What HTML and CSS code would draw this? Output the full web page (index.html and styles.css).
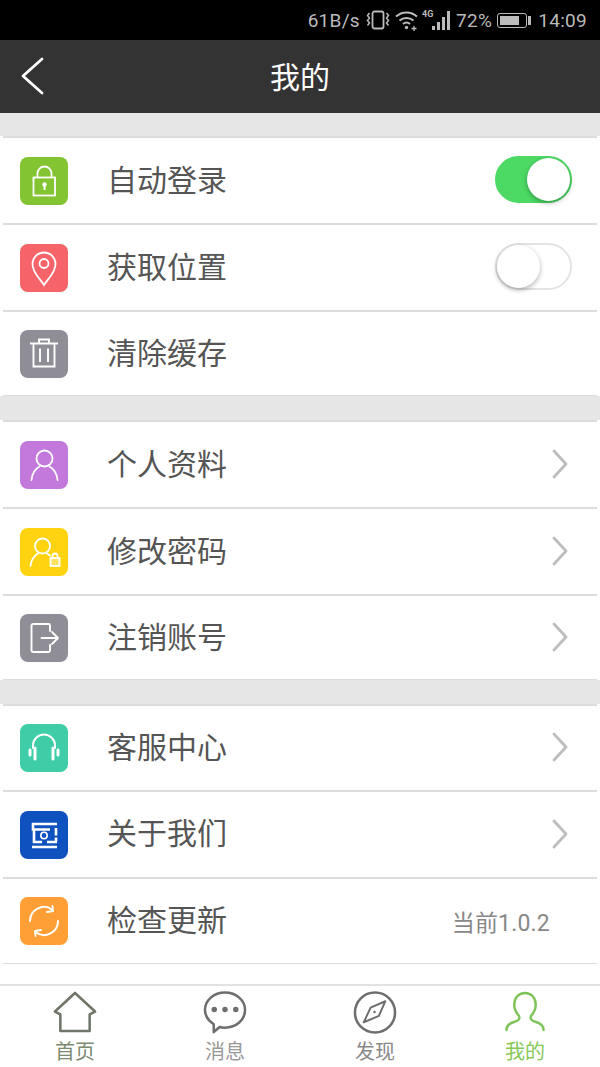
FILE: index.html
```html
<!DOCTYPE html>
<html lang="zh-CN">

<head>
    <meta charset="UTF-8">
    <meta content="width=device-width, initial-scale=1.0" name="viewport">
    <title>我的</title>
    <link rel="stylesheet" href="styles.css">
</head>

<body>

    <!-- 状态栏 -->
    <div class="statusbar">
        <span class="st-speed">61B/s</span>
        <svg class="st-vibrate" width="24" height="24" viewBox="0 0 24 24" fill="none" stroke="#bbb" stroke-width="1.800">
            <rect x="6.500" y="3.500" width="11" height="17" rx="2" />
            <path d="M3.500 5l-2 2.500 2 2.500-2 2.500 2 2.500-2 2.500M20.500 5l2 2.500-2 2.500 2 2.500-2 2.500 2 2.500" stroke-width="1.500" />
        </svg>
        <svg class="st-wifi" width="23" height="22" viewBox="0 0 23 22" fill="none" stroke="#bbb" stroke-width="2">
            <path d="M1 7.500c6-5.500 15-5.500 21 0M4.500 11.500c4-3.500 10-3.500 14 0M8 15c2-1.700 5-1.700 7 0" />
            <circle cx="11.500" cy="18.500" r="1.700" fill="#bbb" stroke="none" />
            <path d="M16.500 19.500h5M19 17v5" stroke-width="1.300" />
        </svg>
        <span class="st-net">
            <span class="st-4g">4G</span>
            <span class="st-bars">
                <i class="b1"></i><i class="b2"></i><i class="b3"></i><i class="b4"></i>
            </span>
        </span>
        <span class="st-batt-text">72%</span>
        <span class="st-batt"><span class="st-batt-fill"></span></span>
        <span class="st-batt-tip"></span>
        <span class="st-time">14:09</span>
    </div>

    <div class="header">
        <svg class="back" width="26" height="38" viewBox="0 0 26 38" fill="none" stroke="#fff" stroke-width="2.800" stroke-linecap="round" stroke-linejoin="round">
            <path d="M22 2 L3 19 L22 36" />
        </svg>
        <h1>我的</h1>
    </div>

    <div class="gap first"></div>

    <div class="group">
        <div class="row">
            <span class="icon green">
                <svg width="48" height="48" viewBox="0 0 48 48" fill="none" stroke="#fff" stroke-width="1.800">
                    <rect x="13.500" y="20.500" width="21.500" height="18" />
                    <path d="M17.500 20.500v-4a7 7 0 0 1 14 0v4" />
                    <circle cx="24.500" cy="27.500" r="2.200" fill="#fff" stroke="none" />
                    <path d="M24.500 28v5" stroke-width="2" />
                </svg>
            </span>
            <span class="label">自动登录</span>
            <span class="switch on"><span class="knob"></span></span>
        </div>
        <div class="row">
            <span class="icon red">
                <svg width="48" height="48" viewBox="0 0 48 48" fill="none" stroke="#fff" stroke-width="1.800">
                    <path d="M24 41c-4-6.500-11.500-12-11.500-21a11.500 11.500 0 0 1 23 0c0 9-7.500 14.500-11.500 21z" />
                    <circle cx="24" cy="19.500" r="4.500" />
                </svg>
            </span>
            <span class="label">获取位置</span>
            <span class="switch"><span class="knob"></span></span>
        </div>
        <div class="row">
            <span class="icon gray">
                <svg width="48" height="48" viewBox="0 0 48 48" fill="none" stroke="#fff" stroke-width="1.900">
                    <path d="M10 13.500h28M19 13.500v-4h10v4M13.500 13.500v23h21v-23M20 18.500v13.500M28 18.500v13.500" />
                </svg>
            </span>
            <span class="label">清除缓存</span>
        </div>
    </div>

    <div class="gap"></div>

    <div class="group">
        <div class="row">
            <span class="icon purple">
                <svg width="48" height="48" viewBox="0 0 48 48" fill="none" stroke="#fff" stroke-width="1.800" stroke-linecap="round">
                    <circle cx="24.500" cy="17.500" r="8" />
                    <path d="M11.500 39c.5-6 3.500-11 8-13.500M37.500 39c-.5-6-3.500-11-8-13.500" />
                </svg>
            </span>
            <span class="label">个人资料</span>
            <svg class="chevron" width="18" height="30" viewBox="0 0 18 30" fill="none" stroke="#bdbdbd" stroke-width="2.800" stroke-linecap="round" stroke-linejoin="round">
                <path d="M3 2 L15 15 L3 28" />
            </svg>
        </div>
        <div class="row">
            <span class="icon yellow">
                <svg width="48" height="48" viewBox="0 0 48 48" fill="none" stroke="#fff" stroke-width="1.800" stroke-linecap="round">
                    <circle cx="22.500" cy="18" r="7.500" />
                    <path d="M10.500 38c.5-6 3.500-10 7.500-12.500M27 25.500l3 2" />
                    <rect x="30.500" y="30" width="9" height="8" fill="#fff" fill-opacity="0.350" />
                    <path d="M32.500 30v-2a2.500 2.500 0 0 1 5 0v2" />
                </svg>
            </span>
            <span class="label">修改密码</span>
            <svg class="chevron" width="18" height="30" viewBox="0 0 18 30" fill="none" stroke="#bdbdbd" stroke-width="2.800" stroke-linecap="round" stroke-linejoin="round">
                <path d="M3 2 L15 15 L3 28" />
            </svg>
        </div>
        <div class="row">
            <span class="icon gray">
                <svg width="48" height="48" viewBox="0 0 48 48" fill="none" stroke="#fff" stroke-width="1.900" stroke-linecap="round" stroke-linejoin="round">
                    <path d="M30 17v-5.500a1.500 1.500 0 0 0-1.500-1.500h-15a2 2 0 0 0-2 2v24a2 2 0 0 0 2 2h15a1.500 1.500 0 0 0 1.500-1.500v-5.500" />
                    <path d="M21.500 24h16M32 18l6 6-6 6" />
                </svg>
            </span>
            <span class="label">注销账号</span>
            <svg class="chevron" width="18" height="30" viewBox="0 0 18 30" fill="none" stroke="#bdbdbd" stroke-width="2.800" stroke-linecap="round" stroke-linejoin="round">
                <path d="M3 2 L15 15 L3 28" />
            </svg>
        </div>
    </div>

    <div class="gap"></div>

    <div class="group third">
        <div class="row">
            <span class="icon teal">
                <svg width="48" height="48" viewBox="0 0 48 48" fill="none" stroke="#fff" stroke-width="2" stroke-linecap="round">
                    <path d="M13 24v-2.500a11 11 0 0 1 22 0v2.500" />
                    <path d="M10 26v5M15 24v11M33 24v11M38 26v5" stroke-width="3" />
                </svg>
            </span>
            <span class="label">客服中心</span>
            <svg class="chevron" width="18" height="30" viewBox="0 0 18 30" fill="none" stroke="#bdbdbd" stroke-width="2.800" stroke-linecap="round" stroke-linejoin="round">
                <path d="M3 2 L15 15 L3 28" />
            </svg>
        </div>
        <div class="row">
            <span class="icon blue">
                <svg width="48" height="48" viewBox="0 0 48 48" fill="none" stroke="#fff" stroke-width="2.600">
                    <path d="M12 13h25M13 12v6.500h17M14 18v13h8M36 17v7.500M36 26.500v4.500M27 31h10M12 36h25" />
                    <circle cx="24" cy="24.500" r="3.200" stroke-width="1.600" />
                </svg>
            </span>
            <span class="label">关于我们</span>
            <svg class="chevron" width="18" height="30" viewBox="0 0 18 30" fill="none" stroke="#bdbdbd" stroke-width="2.800" stroke-linecap="round" stroke-linejoin="round">
                <path d="M3 2 L15 15 L3 28" />
            </svg>
        </div>
        <div class="row">
            <span class="icon orange">
                <svg width="48" height="48" viewBox="0 0 48 48" fill="none" stroke="#fff" stroke-width="2" stroke-linecap="round" stroke-linejoin="round">
                    <path d="M10 24a14 14 0 0 1 22-11.500M38 24a14 14 0 0 1-22 11.500" />
                    <path d="M27 15l6-1-.5-5M21 33l-6 1 .5 5" stroke-width="1.800" />
                </svg>
            </span>
            <span class="label">检查更新</span>
            <span class="version">当前1.0.2</span>
        </div>
    </div>

    <div class="spacer"></div>

    <!-- 底部导航 -->
    <div class="tabbar">
        <div class="tab home">
            <svg width="46" height="44" viewBox="0 0 46 44" fill="none" stroke="#6f7568" stroke-width="2.600" stroke-linejoin="round">
                <path d="M23 2 L2.500 21 L8 24 V41 H38 V24 L43.500 21 Z" />
            </svg>
            <span>首页</span>
        </div>
        <div class="tab msg">
            <svg width="46" height="44" viewBox="0 0 46 44" fill="none" stroke="#6e6e6e" stroke-width="2.600" stroke-linejoin="round">
                <path d="M23 1.500c11.500 0 20.500 8 20.500 18s-9 18-20.500 18c-2 0-3.500 0-5.500-.7l-6 5.200v-8c-5-3.300-9-8.500-9-14.500 0-10 9-18 20.500-18z" />
                <circle cx="12" cy="19" r="2.800" fill="#6e6e6e" stroke="none" />
                <circle cx="23" cy="19" r="2.800" fill="#6e6e6e" stroke="none" />
                <circle cx="34" cy="19" r="2.800" fill="#6e6e6e" stroke="none" />
            </svg>
            <span>消息</span>
        </div>
        <div class="tab find">
            <svg width="46" height="44" viewBox="0 0 46 44" fill="none" stroke="#6e6e6e" stroke-width="2.600" stroke-linejoin="round">
                <circle cx="23" cy="22" r="20.500" />
                <path d="M33.500 10.500 L27 25.500 L11.500 32 L18.500 17 Z" stroke-width="2" />
                <circle cx="22.500" cy="21.500" r="1.300" fill="#6e6e6e" stroke="none" />
            </svg>
            <span>发现</span>
        </div>
        <div class="tab me">
            <svg width="46" height="44" viewBox="0 0 46 44" fill="none" stroke="#7fc45a" stroke-width="2.500" stroke-linecap="round" stroke-linejoin="round">
                <path d="M4 40c0-5 3-7 8.500-8.500 5-1.500 5.500-4 4-6.500-3-3.500-4.500-7-4.500-11 0-7 4.500-12 11-12s11 5 11 12c0 4-1.500 7.500-4.500 11-1.500 2.500-1 5 4 6.500 5.500 1.500 8.500 3.500 8.500 8.500" />
            </svg>
            <span>我的</span>
        </div>
    </div>

</body>

</html>
```

FILE: styles.css
```css
* {
    box-sizing: border-box;
}

body {
    margin: 0;
    width: 600px;
    height: 1067px;
    overflow: hidden;
    font-family: Roboto, "Noto Sans CJK SC", sans-serif;
    background: white;
}

.statusbar {
    height: 40px;
    background: #000;
    color: #bbb;
    display: flex;
    align-items: center;
    justify-content: flex-end;
    padding-right: 13px;
    font-size: 19px;
    letter-spacing: 0.3px;
}

.st-vibrate {
    margin-left: 6px;
}

.st-wifi {
    margin-left: 5px;
}

.st-net {
    display: flex;
    align-items: flex-end;
    height: 20px;
    position: relative;
    width: 30px;
    margin-left: 4px;
}

.st-4g {
    font-size: 9px;
    font-weight: bold;
    position: absolute;
    top: 0;
    left: 0;
    line-height: 9px;
    letter-spacing: 0;
}

.st-bars {
    display: flex;
    align-items: flex-end;
    gap: 2px;
    margin-left: 10px;
}

.st-bars i {
    display: block;
    width: 3px;
    background: #bbb;
}

.b1 { height: 4px; }
.b2 { height: 8px; }
.b3 { height: 13px; }
.b4 { height: 19px; }

.st-batt-text {
    margin-left: 4px;
}

.st-batt {
    width: 30px;
    height: 15px;
    border: 1px solid #bbb;
    border-radius: 3px;
    padding: 2px;
    margin-left: 5px;
}

.st-batt-fill {
    display: block;
    width: 78%;
    height: 100%;
    background: #bbb;
}

.st-batt-tip {
    width: 3px;
    height: 9px;
    background: #bbb;
    margin-left: 1px;
}

.st-time {
    margin-left: 7px;
}

.header {
    height: 73px;
    background: #333;
    display: flex;
    align-items: center;
    justify-content: center;
    position: relative;
}

.header h1 {
    margin: -4px 0 0;
    font-size: 30px;
    font-weight: normal;
    color: white;
}

.back {
    position: absolute;
    left: 20px;
    top: 17px;
}

.gap {
    height: 24px;
    background: #e6e6e6;
}

.gap.first {
    height: 23px;
}

.row {
    height: 87px;
    display: flex;
    align-items: center;
    margin: 0 3px;
    padding: 1px 17px 0;
    border-top: 2px solid #dcdcdc;
}

.row:last-child {
    height: 86px;
    border-bottom: 1px solid #dcdcdc;
}

.third .row {
    padding-top: 0;
}

.third .row:first-child {
    height: 86px;
}

.third .row:last-child {
    height: 87px;
}

.icon {
    width: 48px;
    height: 48px;
    border-radius: 8px;
    flex-shrink: 0;
}

.icon svg {
    display: block;
}

.green { background: #82c431; }
.red { background: #f66469; }
.gray { background: #8f8e96; }
.purple { background: #c378dc; }
.yellow { background: #ffd30f; }
.teal { background: #3ecda6; }
.blue { background: #0f52bf; }
.orange { background: #ff9f35; }

.label {
    margin-left: 39px;
    font-size: 30px;
    line-height: 40px;
    margin-top: -1px;
    color: #555;
    flex: 1;
}

.switch {
    width: 77px;
    height: 47px;
    border-radius: 24px;
    border: 2px solid #e3e3e3;
    background: white;
    margin-right: 8px;
    margin-top: -4px;
    display: flex;
    align-items: center;
}

.switch.on {
    background: #4cd964;
    border-color: #4cd964;
    justify-content: flex-end;
}

.knob {
    width: 43px;
    height: 43px;
    border-radius: 50%;
    background: white;
    box-shadow: 0 2px 5px rgba(0, 0, 0, 0.3);
    flex-shrink: 0;
}

.chevron {
    margin-right: 11px;
    margin-top: -2px;
}

.version {
    font-size: 23px;
    color: #888;
    margin-right: 30px;
    margin-top: -1px;
    letter-spacing: 0.2px;
}

.spacer {
    height: 20px;
}

.tabbar {
    height: 83px;
    display: flex;
    border-top: 2px solid #e2e2e2;
}

.tab {
    flex: 1;
    display: flex;
    flex-direction: column;
    align-items: center;
    padding-top: 5px;
    font-size: 20px;
    color: #999;
}

.tab span {
    line-height: 30px;
    margin-top: 3px;
}

.home span { color: #7c8a70; }
.find span { color: #888; }
.me span { color: #86c85a; }
```
